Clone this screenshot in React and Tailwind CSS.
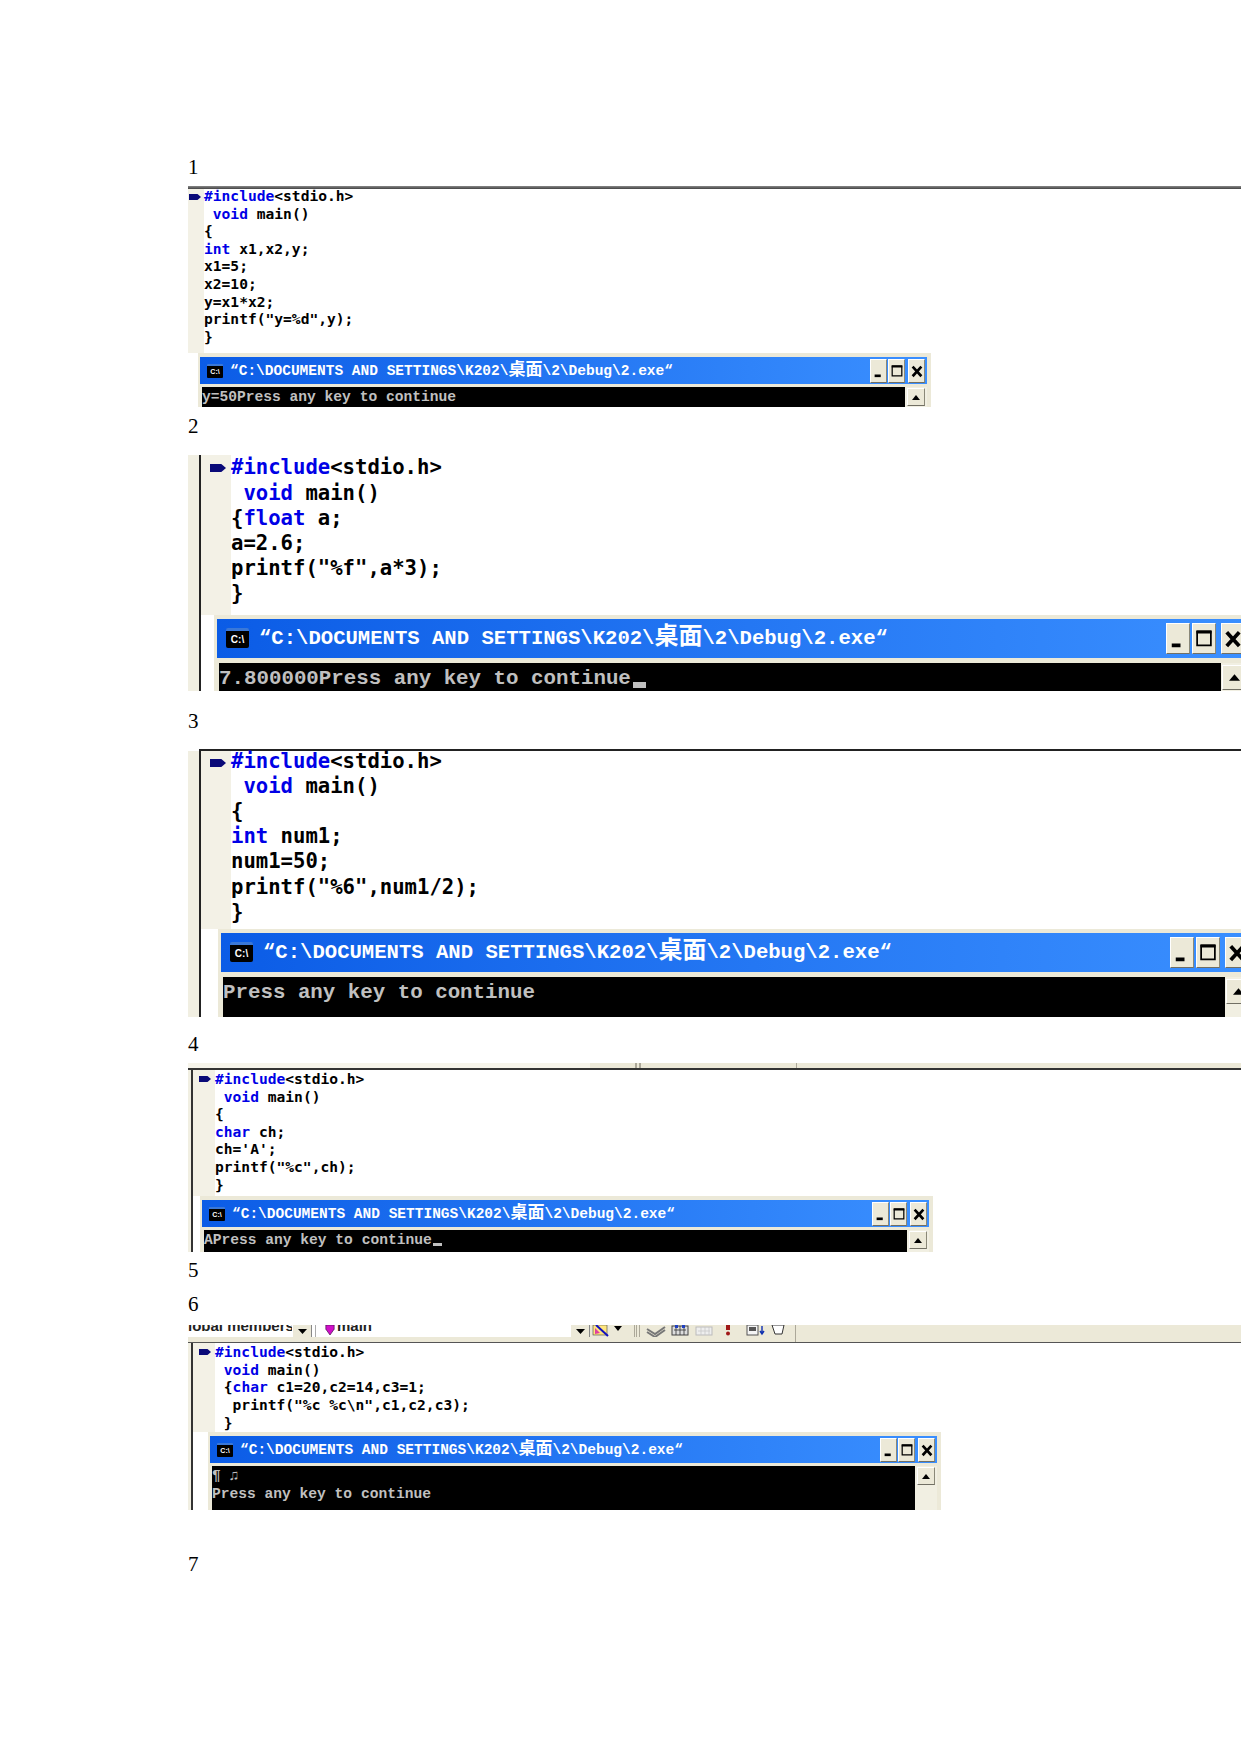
const mono = "font-['Liberation_Mono','Noto_Sans_CJK_SC',monospace]";
const codeFont = "font-['DejaVu_Sans_Mono',monospace]";

const K = ({ children }) => <span className="text-[#0000e6]">{children}</span>;

const include = <><K>#include</K>&lt;stdio.h&gt;</>;
const voidMain = <> <K>void</K> main()</>;

const Marker = ({ className }) => (
    <svg viewBox="0 0 12 6" preserveAspectRatio="none" className={className}>
        <path d="M0 0 L8.5 0 L12 3 L8.5 6 L0 6 Z" fill="#0a0a78" />
    </svg>
);

const MinIcon = ({ className }) => (
    <svg viewBox="0 0 16 20" className={className}>
        <rect x="3" y="14" width="7" height="3" fill="#000" />
    </svg>
);

const MaxIcon = ({ className }) => (
    <svg viewBox="0 0 16 20" className={className}>
        <path d="M2.5 4.5 H13.5 V15.5 H2.5 Z" fill="none" stroke="#000" strokeWidth="1.4" />
        <rect x="2" y="3.5" width="12" height="2.5" fill="#000" />
    </svg>
);

const CloseIcon = ({ className }) => (
    <svg viewBox="0 0 16 20" className={className}>
        <path d="M3 5 L13 16 M13 5 L3 16" stroke="#000" strokeWidth="3" />
    </svg>
);

const UpArrow = ({ className }) => (
    <svg viewBox="0 0 10 6" className={className}>
        <path d="M5 0 L10 6 H0 Z" fill="#000" />
    </svg>
);

const WinButton = ({ className, children }) => (
    <div className={`flex items-center justify-center bg-[#ece9d8] border border-t-white border-l-white border-r-[#8a8878] border-b-[#716f64] ${className}`}>
        {children}
    </div>
);

const variants = {
    small: {
        frame: 'w-[733px] pl-[2px] pt-[4px]',
        title: 'w-[727px] h-[27px] pl-[7px] pr-[2px] text-[14.5px]',
        icon: 'w-[16px] h-[14px] mr-[7px] text-[7px] rounded-[1px] border-t-2',
        cjk: 'text-[17px]',
        btnGap: 'gap-[1px]',
        btn: 'w-[17px] h-[24px]',
        closeGap: 'ml-[2px]',
        glyph: 'w-[14px] h-[18px]',
        gap: 'mt-[3px]',
        body: 'w-[703px] pt-[2px] text-[14.6px] leading-[17.5px]',
        scroll: 'w-[22px]',
        scrollBtn: 'w-[18px] h-[18px] mt-[1px] ml-[2px]',
        arrow: 'w-[8px] h-[5px]',
        cursor: 'w-[9px] h-[3px] ml-[1px] align-[-2px]',
    },
    big: {
        frame: 'w-[1100px] pl-[3px] pt-[4px]',
        title: 'w-[1032px] h-[39px] pl-[9px] pr-[4px] text-[20.6px]',
        icon: 'w-[23px] h-[20px] mr-[10px] text-[10px] rounded-[2px] border-t-[3px]',
        cjk: 'text-[24px]',
        btnGap: 'gap-[2px]',
        btn: 'w-[24px] h-[31px]',
        closeGap: 'ml-[3px]',
        glyph: 'w-[20px] h-[25px]',
        gap: 'mt-[5px]',
        body: 'w-[1002px] pt-[3px] text-[20.8px] leading-[25px]',
        scroll: 'w-[26px]',
        scrollBtn: 'w-[24px] h-[25px] mt-[2px] ml-[1px]',
        arrow: 'w-[11px] h-[7px]',
        cursor: 'w-[13px] h-[6px] ml-[2px] align-[-4px]',
    },
};

const Console = ({ size = 'small', bodyHeight, output, cursor, className = '' }) => {
    const v = variants[size];
    return (
        <div className={`bg-[#ece9d8] ${v.frame} ${className}`}>
            <div className={`flex items-center bg-gradient-to-r from-[#0b5ce6] to-[#3a8fff] ${v.title}`}>
                <div className={`flex items-center justify-center shrink-0 bg-black text-white font-bold leading-none font-['Liberation_Sans',sans-serif] border-t-[#3a78d8] ${v.icon}`}>C:\</div>
                <span className={`${mono} font-bold text-white whitespace-pre`}>
                    “C:\DOCUMENTS AND SETTINGS\K202\<span className={v.cjk}>桌面</span>\2\Debug\2.exe“
                </span>
                <div className={`ml-auto flex items-center shrink-0 ${v.btnGap}`}>
                    <WinButton className={v.btn}><MinIcon className={v.glyph} /></WinButton>
                    <WinButton className={v.btn}><MaxIcon className={v.glyph} /></WinButton>
                    <WinButton className={`${v.btn} ${v.closeGap}`}><CloseIcon className={v.glyph} /></WinButton>
                </div>
            </div>
            <div className={`flex pl-[2px] overflow-hidden ${v.gap} ${bodyHeight}`}>
                <div className={`bg-black text-[#c0c0c0] whitespace-pre font-bold ${mono} ${v.body}`}>
                    {output.map((line, i) => (
                        <div key={i}>
                            {line}
                            {cursor && <span className={`inline-block bg-[#c0c0c0] ${v.cursor}`} />}
                        </div>
                    ))}
                </div>
                <div className={`bg-[#f1efe2] shrink-0 ${v.scroll}`}>
                    <WinButton className={v.scrollBtn}><UpArrow className={v.arrow} /></WinButton>
                </div>
            </div>
        </div>
    );
};

const Code = ({ lines, size, className }) => (
    <div className={`flex-1 font-bold text-black whitespace-pre ${codeFont} ${size === 'big' ? 'text-[20.6px] leading-[25.2px]' : 'text-[14.6px] leading-[17.6px]'} ${className}`}>
        {lines.map((line, i) => <div key={i}>{line}</div>)}
    </div>
);

const Shot = ({ edge, gutter, marker, codeBottom, top, lines, size, console: con }) => (
    <div>
        {top}
        <div className="flex">
            {edge}
            <div className="flex-1 min-w-0">
                <div className="flex">
                    <div className={`shrink-0 bg-[#f3f1e6] ${gutter}`}>
                        <Marker className={marker} />
                    </div>
                    <Code lines={lines} size={size} className={codeBottom} />
                </div>
                {con}
            </div>
        </div>
    </div>
);

const Label = ({ children, className }) => (
    <div className={`h-6 leading-6 text-[21px] text-black font-['Liberation_Serif',serif] ${className}`}>{children}</div>
);

const WideEdge = () => (
    <div className="flex shrink-0">
        <div className="w-[11px] bg-[#f1efe2]" />
        <div className="w-[2px] bg-[#222]" />
    </div>
);

const ThinEdge = () => (
    <div className="flex shrink-0">
        <div className="w-[3px] bg-[#f1efe2]" />
        <div className="w-[2px] bg-[#333]" />
    </div>
);

const ToolGlyphs = () => (
    <svg width="205" height="12" viewBox="0 0 205 12" className="shrink-0">
        {/* find-in-files style icon */}
        <rect x="3" y="0" width="14" height="10" fill="#ffe680" stroke="#444" strokeWidth="0.6" />
        <path d="M6 0 L18 11" stroke="#1010c0" strokeWidth="2" />
        <path d="M5 3 L10 8 L5 9 Z" fill="#e040a0" />
        <path d="M24 1 H32 L28 6 Z" fill="#000" />
        {/* grip */}
        <path d="M44.5 0 V12 M46.5 0 V12 M49.5 0 V12" stroke="#aca899" strokeWidth="1" />
        {/* compile */}
        <path d="M57 4 L65 9 L75 2 M57 7 L65 12 L75 5" stroke="#777" strokeWidth="2" fill="none" />
        {/* build */}
        <rect x="82" y="1" width="16" height="9" fill="#ddd" stroke="#444" />
        <path d="M84 5 H96 M86 1 V10 M90 1 V10 M94 1 V10" stroke="#333" strokeWidth="0.8" />
        <rect x="85" y="0" width="3" height="3" fill="#2040c0" />
        <rect x="92" y="0" width="3" height="3" fill="#2040c0" />
        {/* stop build, greyed out */}
        <rect x="106" y="2" width="16" height="8" fill="#eee" stroke="#bbb" />
        <path d="M108 6 H120 M111 2 V10 M115 2 V10 M119 2 V10" stroke="#c8c8c8" strokeWidth="0.8" />
        {/* run */}
        <rect x="136" y="0" width="4" height="5" fill="#a01818" />
        <circle cx="138" cy="8.5" r="2" fill="#a01818" />
        {/* step */}
        <rect x="157" y="0" width="11" height="10" fill="#f4f4f4" stroke="#555" />
        <rect x="159" y="2" width="7" height="4" fill="#555" />
        <path d="M172 1 V8 M170 6 L172 9 L174 6" stroke="#1030b0" strokeWidth="1.4" fill="none" />
        {/* hand */}
        <path d="M182 0 H194 L192 9 H185 Z" fill="#fff" stroke="#333" strokeWidth="1" />
    </svg>
);

const Toolbar = () => (
    <div className="h-[18px] overflow-hidden bg-[#ece9d8] border-b border-b-[#555]">
        <div className="flex h-[12px]">
            <div className="flex w-[402px] shrink-0 bg-white overflow-hidden">
                <span className="w-[104px] shrink-0 overflow-hidden whitespace-pre text-[15px] leading-[14px] -mt-[6px] font-bold text-[#222] font-['Liberation_Sans',sans-serif]">lobal members</span>
                <div className="flex items-center justify-center w-[19px] h-[12px] ml-[1px] bg-[#ece9d8] border-r border-r-[#888]">
                    <svg width="9" height="5" viewBox="0 0 9 5"><path d="M0 0 H9 L4.5 5 Z" /></svg>
                </div>
                <div className="w-[1px] ml-[3px] bg-[#aaa]" />
                <svg width="10" height="10" viewBox="0 0 12 12" className="ml-[9px] mr-[2px] shrink-0">
                    <path d="M1 0 H11 V5 L6 12 L1 5 Z" fill="#d010c8" stroke="#40104a" strokeWidth="0.8" />
                </svg>
                <span className="text-[15px] leading-[14px] -mt-[6px] font-bold text-[#222] font-['Liberation_Sans',sans-serif]">main</span>
                <div className="flex items-center justify-center w-[19px] h-[12px] ml-auto bg-[#ece9d8] border-r border-r-[#888]">
                    <svg width="9" height="5" viewBox="0 0 9 5"><path d="M0 0 H9 L4.5 5 Z" /></svg>
                </div>
            </div>
            <ToolGlyphs />
            <div className="w-[1px] h-[18px] bg-[#aca899]" />
        </div>
    </div>
);

const TopStrip = () => (
    <div className="flex h-[7px] border-b-2 border-b-[#333]">
        <div className="w-[402px] bg-[#f6f4ea]" />
        <div className="flex flex-1 bg-[#ece9d8]">
            <div className="w-[2px] ml-[45px] bg-[#aca899]" />
            <div className="w-[2px] ml-[2px] bg-[#aca899]" />
            <div className="w-[1px] ml-[155px] bg-[#aca899]" />
        </div>
    </div>
);

const App = () => {
    return (
        <div className="w-[1241px] h-[1754px] overflow-hidden bg-white pl-[188px]">
            <Label className="mt-[155px]">1</Label>
            <div className="mt-[7px] w-[1053px] overflow-hidden">
                <Shot
                    top={<div className="h-[3px] bg-gradient-to-b from-[#888] to-[#444]" />}
                    gutter="w-[16px]"
                    marker="w-[12px] h-[6px] ml-[1px] mt-[5px]"
                    codeBottom="-mt-[2px] pb-[8px]"
                    size="small"
                    lines={[include, voidMain, '{', <><K>int</K> x1,x2,y;</>, 'x1=5;', 'x2=10;', 'y=x1*x2;', 'printf("y=%d",y);', '}']}
                    console={<Console className="ml-[10px]" bodyHeight="h-[20px]" output={['y=50Press any key to continue']} />}
                />
            </div>

            <Label className="mt-[7px]">2</Label>
            <div className="mt-[17px] w-[1053px] overflow-hidden">
                <Shot
                    edge={<WideEdge />}
                    gutter="w-[30px]"
                    marker="w-[16px] h-[8px] ml-[9px] mt-[9px]"
                    codeBottom="pb-[8px]"
                    size="big"
                    lines={[include, voidMain, <>{'{'}<K>float</K> a;</>, 'a=2.6;', 'printf("%f",a*3);', '}']}
                    console={<Console size="big" className="ml-[13px]" bodyHeight="h-[28px]" cursor output={['7.800000Press any key to continue']} />}
                />
            </div>

            <Label className="mt-[18px]">3</Label>
            <div className="mt-[16px] w-[1053px] overflow-hidden">
                <Shot
                    top={<div className="h-[2px] ml-[11px] bg-[#222]" />}
                    edge={<WideEdge />}
                    gutter="w-[30px]"
                    marker="w-[16px] h-[8px] ml-[9px] mt-[8px]"
                    codeBottom="-mt-[2px] pb-[4px]"
                    size="big"
                    lines={[include, voidMain, '{', <><K>int</K> num1;</>, 'num1=50;', 'printf("%6",num1/2);', '}']}
                    console={<Console size="big" className="ml-[17px]" bodyHeight="h-[40px]" output={['Press any key to continue']} />}
                />
            </div>

            <Label className="mt-[15px]">4</Label>
            <div className="mt-[7px] w-[1053px] overflow-hidden">
                <Shot
                    top={<TopStrip />}
                    edge={<ThinEdge />}
                    gutter="w-[22px]"
                    marker="w-[12px] h-[6px] ml-[6px] mt-[6px]"
                    codeBottom="pb-[3px]"
                    size="small"
                    lines={[include, voidMain, '{', <><K>char</K> ch;</>, "ch='A';", 'printf("%c",ch);', '}']}
                    console={<Console className="ml-[7px]" bodyHeight="h-[22px]" cursor output={['APress any key to continue']} />}
                />
            </div>

            <Label className="mt-[6px]">5</Label>
            <Label className="mt-[10px]">6</Label>
            <div className="mt-[9px] w-[1053px] overflow-hidden">
                <Shot
                    top={<Toolbar />}
                    edge={<ThinEdge />}
                    gutter="w-[22px]"
                    marker="w-[12px] h-[6px] ml-[6px] mt-[6px]"
                    codeBottom="pb-[1px]"
                    size="small"
                    lines={[include, voidMain, <> {'{'}<K>char</K> c1=20,c2=14,c3=1;</>, '  printf("%c %c\\n",c1,c2,c3);', ' }']}
                    console={<Console className="ml-[15px]" bodyHeight="h-[44px]" output={['¶ ♫', 'Press any key to continue']} />}
                />
            </div>

            <Label className="mt-[42px]">7</Label>
        </div>
    );
};

export default App;
